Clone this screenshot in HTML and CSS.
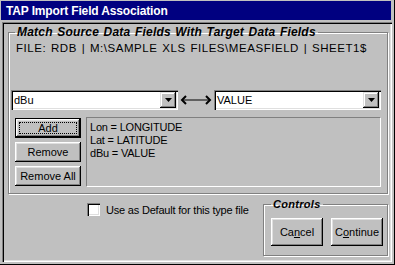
FILE: index.html
```html
<!DOCTYPE html>
<html lang="en">
<head>
    <meta charset="UTF-8">
    <title>TAP Import Field Association</title>
    <link rel="stylesheet" href="styles.css">
</head>
<body>
    <div class="window">
        <div class="titlebar">TAP Import Field Association</div>

        <div class="panel">
            <fieldset class="group match">
                <legend>Match Source Data Fields With Target Data Fields</legend>
                <div class="file">FILE: RDB | M:\SAMPLE XLS FILES\MEASFIELD | SHEET1$</div>

                <div class="combos">
                    <div class="combo">
                        <span class="value">dBu</span>
                        <span class="drop"><svg width="7" height="4" viewBox="0 0 7 4"><path d="M0 0h7L3.5 4z" fill="#000"/></svg></span>
                    </div>
                    <svg class="link" width="32" height="10" viewBox="0 0 32 10">
                        <path d="M6 1L2 5l4 4M26 1l4 4-4 4" fill="none" stroke="#000" stroke-width="2"/>
                        <path d="M3 5h26" stroke="#000" stroke-width="1"/>
                    </svg>
                    <div class="combo">
                        <span class="value">VALUE</span>
                        <span class="drop"><svg width="7" height="4" viewBox="0 0 7 4"><path d="M0 0h7L3.5 4z" fill="#000"/></svg></span>
                    </div>
                </div>

                <div class="mapping">
                    <div class="actions">
                        <button class="btn default"><span class="focus">Add</span></button>
                        <button class="btn">Remove</button>
                        <button class="btn">Remove All</button>
                    </div>
                    <div class="list">
                        <div>Lon = LONGITUDE</div>
                        <div>Lat = LATITUDE</div>
                        <div>dBu = VALUE</div>
                    </div>
                </div>
            </fieldset>

            <div class="bottom">
                <label class="check"><span class="box"></span>Use as Default for this type file</label>
                <fieldset class="group controls">
                    <legend>Controls</legend>
                    <button class="btn big">Ca<u>n</u>cel</button>
                    <button class="btn big">C<u>o</u>ntinue</button>
                </fieldset>
            </div>
        </div>
    </div>
</body>
</html>
```

FILE: styles.css
```css
body {
    margin: 0;
    padding: 0;
    background-color: #c0c0c0;
    font-family: "Liberation Sans", Arial, sans-serif;
    font-size: 11px;
    color: #000;
}

.window {
    width: 395px;
    height: 265px;
    box-sizing: border-box;
    padding: 1px;
    border-right: 1px solid #000;
    border-bottom: 1px solid #000;
    background-color: #c0c0c0;
}

.titlebar {
    height: 19px;
    margin-right: 2px;
    padding-left: 5px;
    background-color: #000080;
    color: #fff;
    font-size: 12px;
    font-weight: bold;
    letter-spacing: -0.15px;
    line-height: 20px;
}

.panel {
    height: 240px;
    margin: 2px 1px 0 1px;
    box-sizing: border-box;
    box-shadow: inset 1px 1px #808080, inset 2px 2px #000, inset -1px -1px #fff, inset -2px -2px #dfdfdf;
    padding: 3px 4px 0 6px;
}

.group {
    margin: 0;
    padding: 0;
    min-width: 0;
    box-sizing: border-box;
    border: 1px solid #808080;
    box-shadow: inset 1px 1px #fff, 1px 1px #fff;
}

.group legend {
    font-weight: bold;
    font-style: italic;
    font-size: 11px;
    line-height: 14px;
    letter-spacing: 0.3px;
    padding: 0 2px;
}

.match {
    width: 380px;
    height: 169px;
    padding: 0 6px 0 2px;
}

.match legend {
    margin-left: 4px;
    font-size: 12px;
    letter-spacing: 0.2px;
    word-spacing: 1px;
}

.file {
    margin: 2px 0 0 5px;
    font-size: 11.5px;
    line-height: 14px;
    letter-spacing: 0.55px;
    word-spacing: 1px;
}

.combos {
    display: flex;
    align-items: center;
    justify-content: space-between;
    margin-top: 35px;
}

.combo {
    width: 167px;
    height: 20px;
    box-sizing: border-box;
    background-color: #fff;
    box-shadow: inset 1px 1px #808080, inset 2px 2px #000, inset -1px -1px #fff, inset -2px -2px #dfdfdf;
    display: flex;
    align-items: center;
    justify-content: space-between;
    padding: 2px;
}

.combo .value {
    padding-left: 1px;
}

.drop {
    width: 16px;
    height: 16px;
    box-sizing: border-box;
    background-color: #c0c0c0;
    box-shadow: inset -1px -1px #000, inset 1px 1px #dfdfdf, inset -2px -2px #808080, inset 2px 2px #fff;
    display: flex;
    align-items: center;
    justify-content: center;
    padding-bottom: 1px;
}

.link {
    display: block;
}

.mapping {
    display: grid;
    grid-template-columns: 66px 295px;
    column-gap: 5px;
    margin: 7px 0 0 4px;
}

.actions {
    display: flex;
    flex-direction: column;
    gap: 4px;
    padding-top: 1px;
}

.btn {
    height: 20px;
    box-sizing: border-box;
    border: none;
    background-color: #c0c0c0;
    font-family: "Liberation Sans", Arial, sans-serif;
    font-size: 11px;
    color: #000;
    padding: 0;
    box-shadow: inset -1px -1px #000, inset 1px 1px #fff, inset -2px -2px #808080, inset 2px 2px #dfdfdf;
}

.btn.default {
    box-shadow: inset -2px -2px #000, inset 1px 1px #000, inset 2px 2px #fff, inset -3px -3px #808080, inset 3px 3px #dfdfdf;
    padding: 4px;
}

.btn .focus {
    display: block;
    height: 100%;
    box-sizing: border-box;
    border: 1px dotted #000;
    line-height: 10px;
}

.list {
    height: 70px;
    box-sizing: border-box;
    border-top: 1px solid #808080;
    border-left: 1px solid #808080;
    border-right: 1px solid #fff;
    border-bottom: 1px solid #fff;
    padding: 3px 3px;
    line-height: 13px;
    letter-spacing: -0.2px;
}

.bottom {
    display: flex;
    justify-content: space-between;
    margin-top: 3px;
}

.check {
    display: flex;
    align-items: center;
    gap: 6px;
    height: 13px;
    margin: 6px 0 0 79px;
    white-space: nowrap;
    letter-spacing: -0.2px;
}

.check .box {
    width: 13px;
    height: 13px;
    flex: none;
    box-sizing: border-box;
    background-color: #fff;
    box-shadow: inset 1px 1px #808080, inset 2px 2px #000, inset -1px -1px #fff, inset -2px -2px #dfdfdf;
}

.controls {
    width: 125px;
    height: 59px;
    padding: 7px 0 0 7px;
    display: flex;
    align-items: flex-start;
    gap: 8px;
}

.controls legend {
    margin-left: 0;
}

.btn.big {
    width: 52px;
    height: 28px;
}
```
